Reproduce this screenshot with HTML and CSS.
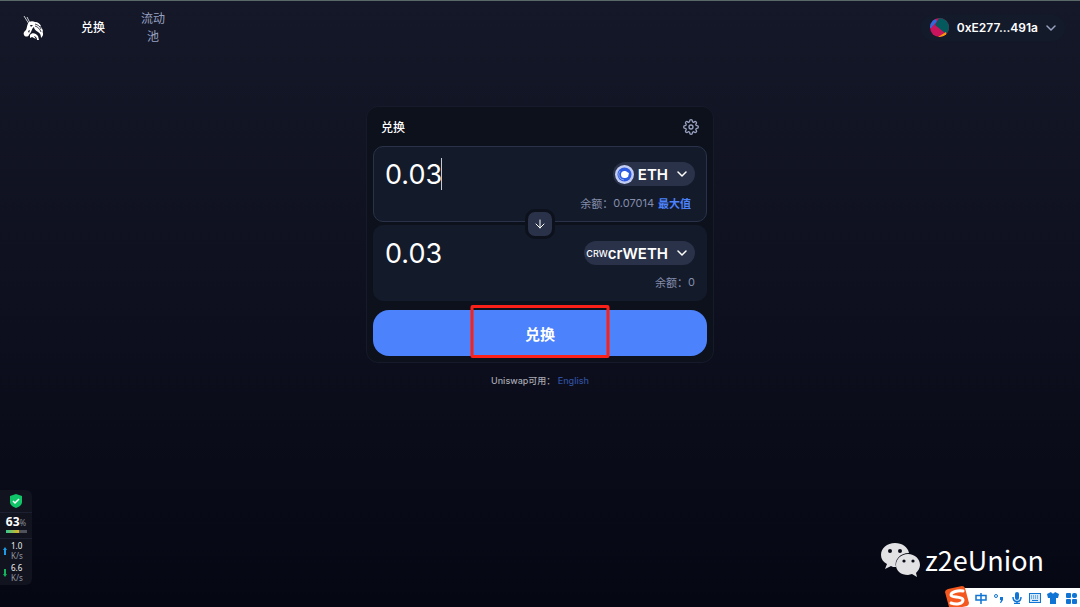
FILE: index.html
```html
<!DOCTYPE html>
<html lang="zh-CN">
<head>
    <meta charset="UTF-8">
    <meta name="viewport" content="width=device-width, initial-scale=1.0">
    <title>Uniswap</title>
    <link rel="stylesheet" href="styles.css">
</head>
<body>

<header class="header">
    <a class="logo" href="#" aria-label="Uniswap">
        <svg width="22" height="26" viewBox="0 0 22 26">
            <path fill="none" stroke="#c9cbd2" stroke-width="1" d="M1 1 L6 9 M4 2 L7 8"/>
            <path fill="#fff" d="M6 7 C8 6 10 6 12 7 C15 7 17 9 18 11 L17 11 C19 13 20 15 20 17 L19 16 C21 19 20 21 18 23 C18 20 17 18 15 17 C12 15 11 14 11 12 C9 13 9 15 8 17 C7 19 6 19 6 20 C5 22 2 22 1 20 C0 18 1 17 3 15 C4 13 4 9 6 7 Z"/>
            <path fill="#fff" d="M7 20 C9 17 13 18 15 21 L16 25 L14 25 C14 22 12 21 11 21 L13 24 L9 22 L7 23 Z"/>
            <path fill="none" stroke="#141727" stroke-width=".8" d="M12 9 C15 10 17 11 18 14 M12 11 C15 12 17 14 18 17"/>
            <path fill="#141727" d="M7 10 L10 10 L8 12 Z M5 16 L7 15 L6 18 Z"/>
        </svg>
    </a>
    <nav class="nav">
        <a class="nav-link active" href="#swap">兑换</a>
        <a class="nav-link" href="#pool">流动池</a>
    </nav>
    <button class="account" type="button">
        <svg width="19" height="19" viewBox="0 0 19 19">
            <clipPath id="avatar"><circle cx="9.5" cy="9.5" r="9.5"/></clipPath>
            <g clip-path="url(#avatar)">
                <rect width="19" height="19" fill="#c8145c"/>
                <path fill="#03595c" d="M9 0 H19 V15 L15 15 L5 7 Z"/>
                <path fill="#2b6be0" d="M0 3 L5 1 L7 3 L1 10 H0 Z"/>
                <path fill="#f59a0c" d="M8 19 L16 14 L17 19 Z"/>
            </g>
        </svg>
        <span>0xE277...491a</span>
        <svg width="10" height="6" viewBox="0 0 10 6"><path class="line muted" d="M1 1 L5 5 L9 1"/></svg>
    </button>
</header>

<main class="main">
    <section class="swap-card">
        <div class="card-header">
            <h1>兑换</h1>
            <button class="settings" type="button" aria-label="设置">
                <svg width="16" height="16" viewBox="0 0 24 24">
                    <circle class="gear" cx="12" cy="12" r="3"/>
                    <path class="gear" d="M19.4 15a1.65 1.65 0 0 0 .33 1.82l.06.06a2 2 0 1 1-2.83 2.83l-.06-.06a1.65 1.65 0 0 0-2.8 1.17V21a2 2 0 1 1-4 0v-.09a1.65 1.65 0 0 0-2.9-1.26l-.06.06a2 2 0 1 1-2.83-2.83l.06-.06A1.65 1.65 0 0 0 3.1 14H3a2 2 0 1 1 0-4h.09a1.65 1.65 0 0 0 1.26-2.8l-.06-.06a2 2 0 1 1 2.83-2.83l.06.06A1.65 1.65 0 0 0 10 3.1V3a2 2 0 1 1 4 0v.09a1.65 1.65 0 0 0 2.8 1.26l.06-.06a2 2 0 1 1 2.83 2.83l-.06.06A1.65 1.65 0 0 0 20.9 10H21a2 2 0 1 1 0 4h-.09a1.65 1.65 0 0 0-1.51 1z"/>
                </svg>
            </button>
        </div>

        <div class="panels">
            <div class="panel focused">
                <div class="panel-row">
                    <label class="amount-field">
                        <span class="caret"></span>
                        <input class="amount" type="text" inputmode="decimal" value="0.03" aria-label="支付数量">
                    </label>
                    <button class="token" type="button">
                        <svg width="19" height="19" viewBox="0 0 19 19">
                            <circle cx="9.5" cy="9.5" r="9.5" fill="#c3cdf2"/>
                            <circle cx="9.5" cy="9.5" r="7" fill="#2f5be0"/>
                            <path fill="none" stroke="#8ba5f2" d="M5 6 A5.5 5.5 0 0 0 9 15"/>
                            <circle cx="9.5" cy="9.5" r="3.5" fill="#fff"/>
                            <path fill="#fff" d="M9 6 L14 8 L13 12 L9 13 Z"/>
                        </svg>
                        <span>ETH</span>
                        <svg class="chevron" width="10" height="6" viewBox="0 0 10 6"><path class="line" d="M1 1 L5 5 L9 1"/></svg>
                    </button>
                </div>
                <div class="balance">
                    <span>余额：</span><span>0.07014</span>
                    <button class="max" type="button">最大值</button>
                </div>
            </div>

            <button class="switch" type="button" aria-label="切换">
                <svg width="10" height="10" viewBox="0 0 10 10"><path class="line thin" d="M5 1 V9 M1 5 L5 9 L9 5"/></svg>
            </button>

            <div class="panel">
                <div class="panel-row">
                    <label class="amount-field">
                        <input class="amount" type="text" inputmode="decimal" value="0.03" aria-label="接收数量">
                    </label>
                    <button class="token" type="button">
                        <span class="token-mark">CRW</span>
                        <span>crWETH</span>
                        <svg class="chevron" width="10" height="6" viewBox="0 0 10 6"><path class="line" d="M1 1 L5 5 L9 1"/></svg>
                    </button>
                </div>
                <div class="balance last">
                    <span>余额：</span><span>0</span>
                </div>
            </div>
        </div>

        <div class="action">
            <button class="swap-button" type="button">兑换</button>
            <div class="highlight"></div>
        </div>
    </section>
    <p class="language">Uniswap可用： <a href="#en">English</a></p>
</main>

<!-- 系统监控悬浮窗 -->
<aside class="monitor">
    <div class="monitor-part">
        <svg width="12" height="14" viewBox="0 0 12 14">
            <path fill="#10c468" d="M6 0 L12 2 V8 C12 11 9 13 6 14 C3 13 0 11 0 8 V2 Z"/>
            <path fill="none" stroke="#fff" stroke-width="1.5" d="M3 7 L5 9 L9 5"/>
        </svg>
    </div>
    <div class="monitor-part">
        <div class="usage"><b>63</b>%</div>
        <div class="usage-bar"><div class="usage-fill" style="width: 63%"></div></div>
    </div>
    <div class="monitor-part speeds">
        <div class="speed">
            <svg width="4" height="8" viewBox="0 0 4 8"><path fill="#1e9be8" d="M2 0 L4 3 H3 V8 H1 V3 H0 Z"/></svg>
            <div>1.0<div class="unit">K/s</div></div>
        </div>
        <div class="speed">
            <svg width="4" height="8" viewBox="0 0 4 8"><path fill="#12b45c" d="M2 8 L4 5 H3 V0 H1 V5 H0 Z"/></svg>
            <div>6.6<div class="unit">K/s</div></div>
        </div>
    </div>
</aside>

<div class="watermark">
    <svg width="40" height="34" viewBox="0 0 40 34">
        <path fill="#e2e2e4" d="M14 0 C6 0 0 5 0 12 C0 16 2 19 6 21 L4 26 L10 23 C11 24 13 24 15 24 C13 17 19 10 28 10 C27 4 21 0 14 0 Z"/>
        <path fill="#e2e2e4" d="M27 11 C20 11 15 16 15 22 C15 28 20 32 27 32 L31 31 L36 34 L35 30 C37 28 39 25 39 22 C39 16 34 11 27 11 Z"/>
        <g fill="#090b17">
            <circle cx="9" cy="8" r="2"/><circle cx="19" cy="8" r="2"/>
            <circle cx="23" cy="18" r="1.6"/><circle cx="32" cy="18" r="1.6"/>
        </g>
    </svg>
    <span>z2eUnion</span>
</div>

<!-- 输入法工具栏 -->
<div class="ime">
    <svg class="ime-logo" width="24" height="23" viewBox="0 0 24 23">
        <path fill="#f4581e" d="M3 3 L17 0 Q19 0 20 2 L24 17 Q24 19 22 20 L8 23 Q5 23 4 21 L0 6 Q0 4 3 3 Z"/>
        <path fill="none" stroke="#fff" stroke-width="3" stroke-linecap="round" d="M18 5 C13 4 6 6 6 9 C6 12 18 10 18 14 C18 18 11 19 6 17"/>
    </svg>
    <svg width="12" height="12" viewBox="0 0 12 12"><path fill="none" stroke="#0f74d4" stroke-width="1.5" d="M6 1 V12 M1 3.5 H11 V8 H1 Z"/></svg>
    <svg width="12" height="12" viewBox="0 0 12 12"><circle cx="3" cy="4" r="1.5" fill="none" stroke="#0f74d4"/><path fill="#0f74d4" d="M7 5 H10 V8 L8 11 H7 L8 8 H7 Z"/></svg>
    <svg width="12" height="12" viewBox="0 0 12 12"><rect x="4" width="4" height="8" rx="2" fill="#0f74d4"/><path fill="none" stroke="#0f74d4" stroke-width="1.5" d="M2 5 C2 11 10 11 10 5 M6 9 V12 M3 11.5 H9"/></svg>
    <svg width="12" height="12" viewBox="0 0 12 12"><rect x=".5" y="1.5" width="11" height="9" fill="#d5e8fa" stroke="#0f74d4"/><path fill="none" stroke="#0f74d4" stroke-dasharray="1 1" d="M2 4 H10 M2 6 H10"/><path stroke="#0f74d4" d="M3 8.5 H9"/></svg>
    <svg width="12" height="12" viewBox="0 0 12 12"><path fill="#0f74d4" d="M0 2 L4 0 Q6 3 8 0 L12 2 L11 6 H9 V12 H3 V6 H1 Z"/></svg>
    <svg width="12" height="12" viewBox="0 0 12 12"><g fill="#0f74d4"><rect x="1" y="1" width="5" height="5" rx="1"/><rect x="7" y="1" width="5" height="5" rx="2"/><rect x="1" y="7" width="5" height="5" rx="1"/><rect x="7" y="7" width="5" height="5" rx="1"/></g></svg>
</div>

</body>
</html>
```

FILE: styles.css
```css
* {
    box-sizing: border-box;
}

body {
    margin: 0;
    min-height: 100vh;
    border-top: 1px solid #5a6967;
    background: linear-gradient(#151828, #0d0f1e 55%, #050713);
    color: #fff;
    font-family: Inter, "Noto Sans CJK SC", sans-serif;
    font-size: 12px;
}

a {
    text-decoration: none;
}

button {
    padding: 0;
    border: none;
    background: none;
    color: inherit;
    font: inherit;
    cursor: pointer;
}

svg {
    display: block;
    flex: none;
}

.line {
    fill: none;
    stroke: #fff;
    stroke-width: 1.5;
    stroke-linecap: round;
    stroke-linejoin: round;
}

.muted {
    stroke: #98a1c0;
}

.thin {
    stroke-width: 1;
}

.header {
    display: flex;
    align-items: center;
    height: 53px;
    padding: 0 15px 0 23px;
}

.nav {
    display: flex;
    align-items: center;
    gap: 36px;
    margin-left: 36px;
}

.nav-link {
    width: 24px;
    color: #98a1c0;
    line-height: 18px;
    text-align: center;
}

.nav-link.active {
    color: #fff;
    font-weight: 500;
}

.account {
    display: flex;
    align-items: center;
    gap: 8px;
    height: 26px;
    margin-left: auto;
    padding: 0 9px;
    border-radius: 13px;
    background: #131a2a;
    font-weight: 600;
}

.main {
    display: flex;
    flex-direction: column;
    align-items: center;
    padding: 52px 16px 0;
}

.swap-card {
    width: 100%;
    max-width: 348px;
    padding: 0 6px 6px;
    border: 1px solid #151b2b;
    border-radius: 12px;
    background: #0d111c;
}

.card-header {
    display: flex;
    justify-content: space-between;
    align-items: center;
    height: 39px;
    padding: 0 8px;
}

.card-header h1 {
    margin: 0;
    font-size: 12px;
    font-weight: 500;
}

.gear {
    fill: none;
    stroke: #98a1c0;
    stroke-width: 2;
}

.panels {
    position: relative;
    display: grid;
    gap: 3px;
}

.panel {
    height: 76px;
    padding: 11px 11px 0;
    border: 1px solid #131a2a;
    border-radius: 10px;
    background: #131a2a;
}

.panel.focused {
    border-color: #293249;
}

.panel-row {
    display: flex;
    justify-content: space-between;
    align-items: center;
    height: 32px;
}

.amount-field {
    position: relative;
    flex: 1;
}

.amount {
    display: block;
    width: 100%;
    height: 32px;
    padding: 0;
    border: none;
    outline: none;
    background: none;
    color: #fff;
    font-family: inherit;
    font-size: 27px;
}

.caret {
    position: absolute;
    left: 56px;
    width: 1px;
    height: 32px;
    background: #c5c9d3;
}

.token {
    display: flex;
    align-items: center;
    height: 24px;
    gap: 4px;
    padding: 0 8px 0 2px;
    border-radius: 12px;
    background: #293249;
    font-size: 15px;
    font-weight: 600;
}

.chevron {
    margin-left: 5px;
}

.token-mark {
    margin-right: -4px;
    font-size: 9px;
    font-weight: 500;
}

.balance {
    display: flex;
    justify-content: flex-end;
    align-items: center;
    height: 26px;
    padding-right: 4px;
    color: #848dab;
    font-size: 11px;
}

.balance.last {
    padding-right: 0;
}

.max {
    margin-left: 4px;
    color: #4c82fb;
    font-weight: 600;
}

.switch {
    position: absolute;
    top: 50%;
    left: 50%;
    display: flex;
    justify-content: center;
    align-items: center;
    width: 30px;
    height: 30px;
    border: 3px solid #0d111c;
    border-radius: 10px;
    background: #293249;
    transform: translate(-50%, -50%);
}

.action {
    position: relative;
    margin-top: 9px;
}

.swap-button {
    display: block;
    width: 100%;
    height: 46px;
    border-radius: 16px;
    background: #4c82fb;
    font-size: 15px;
    font-weight: 600;
}

.highlight {
    position: absolute;
    top: -5px;
    left: 50%;
    width: 139px;
    height: 53px;
    border: 3px solid #fb2118;
    border-radius: 2px;
    transform: translateX(-50%);
    pointer-events: none;
}

.language {
    margin: 10px 0 0;
    color: #a5a7b0;
    font-size: 9px;
    font-weight: 500;
    line-height: 16px;
}

.language a {
    color: #2f4f9e;
}

.monitor {
    position: absolute;
    left: 0;
    bottom: 22px;
    width: 32px;
    border-radius: 0 6px 6px 0;
    background: #11141f;
    font-family: "Noto Sans", sans-serif;
}

.monitor-part {
    display: flex;
    flex-direction: column;
    align-items: center;
    padding: 4px 0;
}

.monitor-part + .monitor-part {
    padding: 2px 0;
    border-top: 1px solid #1c2030;
}

.usage {
    height: 15px;
    color: #868993;
    font-size: 8px;
    line-height: 14px;
}

.usage b {
    color: #fff;
    font-size: 12px;
}

.usage-bar {
    width: 21px;
    height: 3px;
    margin-bottom: 3px;
    background: #4f515b;
}

.usage-fill {
    height: 100%;
    background: linear-gradient(90deg, #31c995, #e4b51c);
}

.speeds {
    gap: 2px;
}

.speed {
    display: flex;
    align-items: center;
    gap: 4px;
    width: 26px;
    color: #eee;
    font-size: 8px;
    line-height: 10px;
}

.unit {
    color: #9295a0;
}

.watermark {
    position: absolute;
    right: 36px;
    bottom: 29px;
    display: flex;
    align-items: center;
    gap: 4px;
    font-family: "Noto Sans CJK SC", sans-serif;
    font-size: 27px;
    line-height: 36px;
}

.ime {
    position: absolute;
    right: 0;
    bottom: 0;
    display: flex;
    align-items: center;
    gap: 6px;
    height: 19px;
    padding-right: 3px;
    background: linear-gradient(90deg, transparent 12px, #fff 12px);
}
```
